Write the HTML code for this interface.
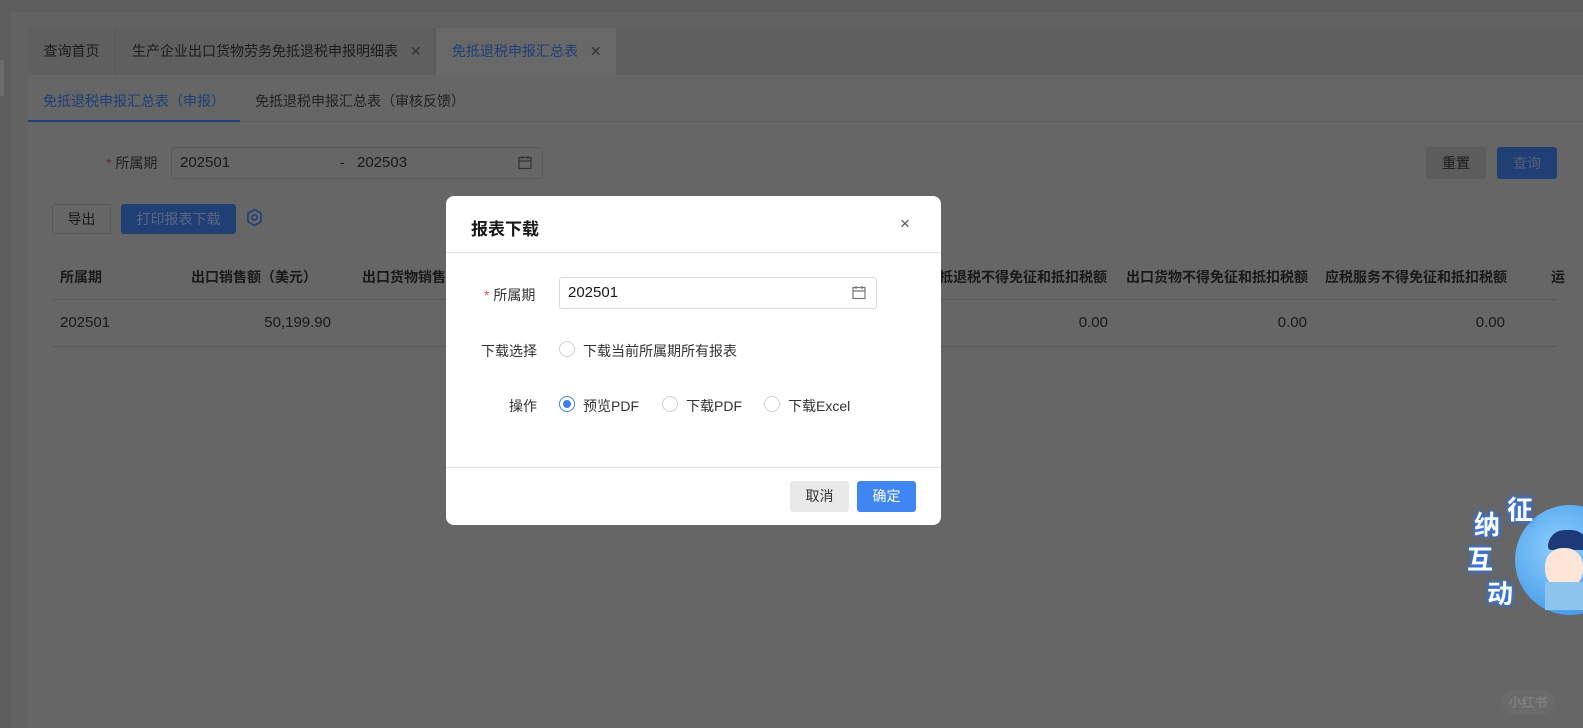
<!DOCTYPE html>
<html><head><meta charset="utf-8"><style>
*{margin:0;padding:0;box-sizing:border-box}
body{width:1583px;height:728px;overflow:hidden;background:#5d5d5d;font-family:"Liberation Sans","Noto Sans CJK SC",sans-serif;font-size:14px;color:#1a1a1a;position:relative}
.abs{position:absolute}
.panel{left:10px;top:12px;width:1573px;height:716px;background:#626262}
.tabs{left:28px;top:28px;width:1555px;height:47px;background:#5f5f5f}
.tab{position:absolute;top:28px;height:47px;line-height:47px;font-size:14px;color:#1c1c1c}
.content{left:28px;top:75px;width:1555px;height:653px;background:#666}
.t{position:absolute;white-space:nowrap}
.mask{left:0;top:0;width:1583px;height:728px}
.dlg{left:446px;top:196px;width:495px;height:329px;background:#fff;border-radius:8px}
.radio{position:absolute;width:16px;height:16px;border:1px solid #d0d0d0;border-radius:50%;background:#fff}
</style></head><body>
<div class="abs panel"></div>
<div class="abs" style="left:0;top:60px;width:4px;height:36px;background:#6c6c6c"></div>
<div class="abs tabs"></div>
<div class="tab" style="left:28px;width:88px;text-align:center;border-right:1px solid #585858">查询首页</div>
<div class="tab" style="left:117px;width:318px;padding-left:15px;border-right:1px solid #585858">生产企业出口货物劳务免抵退税申报明细表 <span style="margin-left:8px;color:#333">✕</span></div>
<div class="tab" style="left:436px;width:180px;padding-left:16px;background:#686868;color:#1e3f78">免抵退税申报汇总表 <span style="margin-left:8px;color:#333">✕</span></div>
<div class="abs content"></div>
<div class="t" style="left:43px;top:91px;color:#1e3f78">免抵退税申报汇总表（申报）</div>
<div class="abs" style="left:28px;top:120px;width:212px;height:2px;background:#1f3f7a"></div>
<div class="abs" style="left:240px;top:121px;width:1343px;height:1px;background:#5c5c5c"></div>
<div class="t" style="left:255px;top:91px;color:#222">免抵退税申报汇总表（审核反馈）</div>
<div class="t" style="left:106px;top:153px;color:#222"><span style="color:#6b2b2b">*</span> 所属期</div>
<div class="abs" style="left:171px;top:147px;width:372px;height:32px;border:1px solid #5a5a5a;border-radius:3px"></div>
<div class="t" style="left:180px;top:154px;font-size:15px">202501</div>
<div class="t" style="left:340px;top:154px">-</div>
<div class="t" style="left:357px;top:154px;font-size:15px">202503</div>
<svg class="abs" style="left:518px;top:155px" width="14" height="15" viewBox="0 0 14 15"><rect x="1" y="2.5" width="12" height="11" fill="none" stroke="#333" stroke-width="1.2"/><path d="M1 6h12M4 1v3M10 1v3" stroke="#333" stroke-width="1.2"/></svg>
<div class="abs" style="left:1426px;top:147px;width:60px;height:32px;background:#5c5c5c;border-radius:3px;line-height:32px;text-align:center">重置</div>
<div class="abs" style="left:1497px;top:147px;width:60px;height:32px;background:#1f3f75;border-radius:3px;line-height:32px;text-align:center;color:#555f77">查询</div>
<div class="abs" style="left:52px;top:204px;width:59px;height:30px;border:1px solid #595959;border-radius:3px;line-height:28px;text-align:center">导出</div>
<div class="abs" style="left:121px;top:204px;width:115px;height:30px;background:#1f3f75;border-radius:3px;line-height:30px;text-align:center;color:#5b6683">打印报表下载</div>
<svg class="abs" style="left:246px;top:208px" width="17" height="19" viewBox="0 0 17 19"><path d="M8.5 1.5l6.5 3.7v8.6l-6.5 3.7-6.5-3.7V5.2z" fill="none" stroke="#1f3f78" stroke-width="1.6"/><circle cx="8.5" cy="9.5" r="2.6" fill="none" stroke="#1f3f78" stroke-width="1.6"/></svg>
<div class="t" style="left:60px;top:267px;font-weight:bold">所属期</div>
<div class="t" style="left:191px;top:267px;font-weight:bold">出口销售额（美元）</div>
<div class="t" style="left:362px;top:267px;font-weight:bold">出口货物销售</div>
<div class="t" style="left:939px;top:267px;font-weight:bold">抵退税不得免征和抵扣税额</div>
<div class="t" style="left:1126px;top:267px;font-weight:bold">出口货物不得免征和抵扣税额</div>
<div class="t" style="left:1325px;top:267px;font-weight:bold">应税服务不得免征和抵扣税额</div>
<div class="t" style="left:1551px;top:267px;font-weight:bold">运</div>
<div class="abs" style="left:52px;top:299px;width:1505px;height:1px;background:#5b5b5b"></div>
<div class="t" style="left:60px;top:314px;font-size:15px">202501</div>
<div class="t" style="left:208px;top:314px;font-size:15px;width:123px;text-align:right">50,199.90</div>
<div class="t" style="left:1000px;top:314px;width:108px;text-align:right;font-size:15px">0.00</div>
<div class="t" style="left:1200px;top:314px;width:107px;text-align:right;font-size:15px">0.00</div>
<div class="t" style="left:1400px;top:314px;width:105px;text-align:right;font-size:15px">0.00</div>
<div class="abs" style="left:52px;top:346px;width:1505px;height:1px;background:#5b5b5b"></div>

<!-- mascot -->
<div class="abs" style="left:1515px;top:505px;width:110px;height:110px;border-radius:50%;background:radial-gradient(circle at 40% 40%,#8fd0ff,#2f8ae0)"></div>
<div class="abs" style="left:1548px;top:530px;width:40px;height:20px;border-radius:20px 20px 4px 4px;background:#1d3a78"></div>
<div class="abs" style="left:1545px;top:548px;width:38px;height:40px;border-radius:45%;background:#fde6d8"></div>
<div class="abs" style="left:1545px;top:582px;width:38px;height:28px;background:#8cc4ee"></div>
<div class="t" style="left:1507px;top:490px;font-size:26px;font-weight:bold;color:#fff;text-shadow:0 0 4px #2a78ff,0 0 6px #2a78ff">征</div>
<div class="t" style="left:1474px;top:505px;font-size:26px;font-weight:bold;color:#fff;text-shadow:0 0 4px #2a78ff,0 0 6px #2a78ff">纳</div>
<div class="t" style="left:1467px;top:540px;font-size:26px;font-weight:bold;color:#fff;text-shadow:0 0 4px #2a78ff,0 0 6px #2a78ff">互</div>
<div class="t" style="left:1487px;top:574px;font-size:26px;font-weight:bold;color:#fff;text-shadow:0 0 4px #2a78ff,0 0 6px #2a78ff">动</div>
<div class="abs" style="left:1502px;top:690px;width:52px;height:25px;border-radius:12px;background:#6a6a6a;color:#7e7e7e;font-size:13px;font-weight:bold;line-height:25px;text-align:center">小红书</div>

<!-- dialog -->
<div class="abs dlg">
  <div class="t" style="left:25px;top:19px;font-size:17px;font-weight:bold">报表下载</div>
  <div class="t" style="left:454px;top:18px;font-size:17px;color:#555">×</div>
  <div class="abs" style="left:0;top:56px;width:495px;height:1px;background:#e4e4e4"></div>
  <div class="t" style="left:38px;top:89px;color:#333"><span style="color:#e05050">*</span> 所属期</div>
  <div class="abs" style="left:113px;top:81px;width:318px;height:32px;border:1px solid #dcdcdc;border-radius:3px"></div>
  <div class="t" style="left:122px;top:88px;font-size:15px">202501</div>
  <svg class="abs" style="left:406px;top:89px" width="14" height="15" viewBox="0 0 14 15"><rect x="1" y="2.5" width="12" height="11" fill="none" stroke="#777" stroke-width="1.2"/><path d="M1 6h12M4 1v3M10 1v3" stroke="#777" stroke-width="1.2"/></svg>
  <div class="t" style="left:35px;top:145px;color:#333">下载选择</div>
  <div class="radio" style="left:113px;top:145px"></div>
  <div class="t" style="left:137px;top:145px;color:#333">下载当前所属期所有报表</div>
  <div class="t" style="left:63px;top:200px;color:#333">操作</div>
  <div class="radio" style="left:113px;top:200px;border-color:#3d7ff0"><div style="position:absolute;left:3px;top:3px;width:8px;height:8px;border-radius:50%;background:#3d7ff0"></div></div>
  <div class="t" style="left:137px;top:200px;color:#333">预览PDF</div>
  <div class="radio" style="left:216px;top:200px"></div>
  <div class="t" style="left:240px;top:200px;color:#333">下载PDF</div>
  <div class="radio" style="left:318px;top:200px"></div>
  <div class="t" style="left:342px;top:200px;color:#333">下载Excel</div>
  <div class="abs" style="left:0;top:271px;width:495px;height:1px;background:#e4e4e4"></div>
  <div class="abs" style="left:344px;top:285px;width:59px;height:31px;background:#e9e9e9;border-radius:3px;line-height:31px;text-align:center;color:#333">取消</div>
  <div class="abs" style="left:411px;top:285px;width:59px;height:31px;background:#3f86f2;border-radius:3px;line-height:31px;text-align:center;color:#fff">确定</div>
</div>
</body></html>
